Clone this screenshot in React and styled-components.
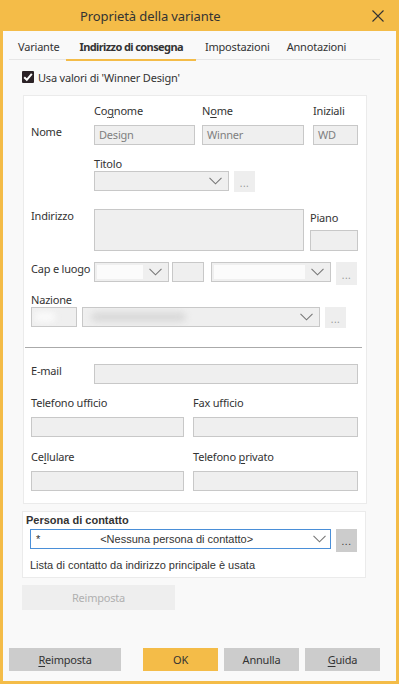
import React from 'react'
import styled, { createGlobalStyle } from 'styled-components'

const ORANGE = '#f4bc48'

const GlobalStyle = createGlobalStyle`
  body {
    margin: 0;
    background: #ffffff;
    font-family: "Noto Sans", "Liberation Sans", sans-serif;
    font-size: 11px;
    letter-spacing: -0.2px;
    color: #333333;
  }
  u { text-decoration-thickness: 1px; text-underline-offset: 2px; }
`

const Window = styled.div`
  width: 399px;
  height: 684px;
  box-sizing: border-box;
  border: 3px solid ${ORANGE};
  border-top: none;
  background: #f9f9f9;
  display: flex;
  flex-direction: column;
`

const TitleBar = styled.div`
  height: 31px;
  margin: 0 -3px;
  background: ${ORANGE};
  display: flex;
  align-items: center;
  justify-content: space-between;
  padding: 0 15px 0 80px;
`

const Title = styled.div`
  font-size: 13px;
  letter-spacing: -0.1px;
  color: #333;
  margin-top: 1px;
`

const TabBar = styled.div`
  height: 28px;
  margin: 0 16px 0 6px;
  border-bottom: 1px solid #e6e6e6;
  display: flex;
`

const Tab = styled.div`
  display: flex;
  align-items: center;
  white-space: nowrap;
  padding: ${(p) => p.$pad || '0 13px'};
  margin-bottom: -1px;
  padding-top: 3px;
  font-weight: ${(p) => (p.$active ? 700 : 400)};
  letter-spacing: ${(p) => (p.$active ? '-0.6px' : '-0.2px')};
  border-bottom: 2px solid ${(p) => (p.$active ? ORANGE : 'transparent')};
  box-sizing: border-box;
  height: 30px;
`

const CheckRow = styled.div`
  display: flex;
  align-items: center;
  gap: 4px;
  margin: 11px 0 0 19px;
  height: 12px;
`

const GroupBox = styled.div`
  margin: 12px 0 0 20px;
  width: 344px;
  box-sizing: border-box;
  background: #ffffff;
  border: 1px solid #ebebeb;
  padding: 8px 8px 12px 7px;
`

const Row = styled.div`
  display: flex;
  align-items: ${(p) => p.$align || 'flex-start'};
  gap: ${(p) => p.$gap || 0}px;
  margin-top: ${(p) => p.$mt || 0}px;
  margin-left: ${(p) => p.$ml || 0}px;
`

const Col = styled.div`
  display: flex;
  flex-direction: column;
  width: ${(p) => (p.$w ? `${p.$w}px` : 'auto')};
  margin-left: ${(p) => p.$ml || 0}px;
  margin-top: ${(p) => p.$mt || 0}px;
  flex: ${(p) => (p.$grow ? 1 : 'none')};
`

const Label = styled.div`
  height: 14px;
  line-height: 14px;
  white-space: nowrap;
  width: ${(p) => (p.$w ? `${p.$w}px` : 'auto')};
  margin-top: ${(p) => p.$mt || 0}px;
  margin-bottom: ${(p) => p.$mb || 0}px;
  flex: none;
`

const Input = styled.div`
  box-sizing: border-box;
  width: ${(p) => (p.$w ? `${p.$w}px` : 'auto')};
  height: ${(p) => p.$h || 20}px;
  flex: ${(p) => (p.$grow ? 1 : 'none')};
  margin-left: ${(p) => p.$ml || 0}px;
  background: #efefef;
  border: 1px solid #c8c8c8;
  color: #808080;
  padding: 0 4px;
  line-height: 18px;
  position: relative;
  overflow: hidden;
`

const ComboBox = styled(Input)`
  display: flex;
  align-items: center;
  justify-content: flex-end;
  padding: 2px 6px 2px 2px;
  gap: 6px;
`

const EditArea = styled.div`
  flex: 1;
  align-self: stretch;
  background: #fbfbfb;
`

const Blur = styled.div`
  position: absolute;
  top: 4px;
  left: ${(p) => p.$l}px;
  width: ${(p) => p.$w}px;
  height: 10px;
  border-radius: 5px;
  background: ${(p) => p.$c};
  filter: blur(3px);
`

const Dots = styled.div`
  width: 21px;
  height: ${(p) => p.$h || 22}px;
  flex: none;
  background: ${(p) => (p.$dark ? '#cccccc' : '#eeeeee')};
  color: ${(p) => (p.$dark ? '#333' : '#999')};
  display: flex;
  align-items: center;
  justify-content: center;
  font-size: 10px;
  padding-top: 2px;
  box-sizing: border-box;
  letter-spacing: 0.5px;
`

const Separator = styled.div`
  height: 1px;
  background: #aaaaaa;
  margin: 19px -4px 0 -6px;
`

const ContactBox = styled.div`
  margin: 7px 0 0 19px;
  width: 344px;
  box-sizing: border-box;
  background: #ffffff;
  border: 1px solid #ebebeb;
  padding: 1px 8px 5px 3px;
  font-family: "Liberation Sans", Arial, sans-serif;
  font-size: 11px;
  letter-spacing: 0;
`

const ContactTitle = styled.div`
  font-weight: 700;
  line-height: 14px;
  color: #333;
`

const ContactCombo = styled.div`
  box-sizing: border-box;
  width: 301px;
  height: 20px;
  border: 1.5px solid #4a8fd8;
  background: #fff;
  display: flex;
  align-items: center;
  padding: 0 4px 0 5px;
  margin-left: 4px;
  color: #333;
`

const ComboText = styled.div`
  flex: 1;
  text-align: center;
`

const Note = styled.div`
  margin: 6px 0 0 4px;
  line-height: 14px;
  color: #333;
`

const DisabledButton = styled.div`
  margin: 7px 0 0 19px;
  width: 153px;
  height: 25px;
  background: #eeeeee;
  color: #b0b0b0;
  display: flex;
  align-items: center;
  justify-content: center;
`

const Footer = styled.div`
  margin-top: auto;
  padding: 0 0 10px 6px;
  display: flex;
`

const FooterButton = styled.div`
  width: ${(p) => p.$w}px;
  height: 23px;
  margin-left: ${(p) => p.$ml || 0}px;
  background: ${(p) => (p.$primary ? ORANGE : '#cccccc')};
  color: #333;
  display: flex;
  align-items: center;
  justify-content: center;
`

const Chevron = () => (
  <svg width="13" height="8" viewBox="0 0 13 8">
    <polyline points="0.5,0.8 6.5,6.8 12.5,0.8" fill="none" stroke="#777" strokeWidth="1.1" />
  </svg>
)

const CloseIcon = () => (
  <svg width="12" height="12" viewBox="0 0 12 12">
    <path d="M0.5 0.5 L11.5 11.5 M11.5 0.5 L0.5 11.5" stroke="#333" strokeWidth="1.1" />
  </svg>
)

const CheckIcon = () => (
  <svg width="12" height="12" viewBox="0 0 12 12">
    <rect width="12" height="12" rx="1" fill="#2b2226" />
    <polyline points="2.2,6.2 4.8,8.8 9.8,2.8" fill="none" stroke="#fff" strokeWidth="2" />
  </svg>
)

const Combo = ({ w, grow, editable, children }) => (
  <ComboBox $w={w} $grow={grow}>
    {editable && <EditArea />}
    {children}
    <Chevron />
  </ComboBox>
)

const App = () => {
  return (
    <>
      <GlobalStyle />
      <Window>
        <TitleBar>
          <Title>Proprietà della variante</Title>
          <CloseIcon />
        </TitleBar>

        <TabBar>
          <Tab $pad="0 7px 0 9px">Variante</Tab>
          <Tab $active>Indirizzo di consegna</Tab>
          <Tab $pad="0 9px 0 9px">Impostazioni</Tab>
          <Tab $pad="0 9px 0 8px">Annotazioni</Tab>
        </TabBar>

        <CheckRow>
          <CheckIcon />
          <span>Usa valori di 'Winner Design'</span>
        </CheckRow>

        <GroupBox>
          <Row>
            <Label $w={63} $mt={21}>Nome</Label>
            <Col $w={101}>
              <Label $mb={7}>Co<u>g</u>nome</Label>
              <Input>Design</Input>
            </Col>
            <Col $w={102} $ml={7}>
              <Label $mb={7}>N<u>o</u>me</Label>
              <Input>Winner</Input>
            </Col>
            <Col $w={45} $ml={9}>
              <Label $mb={7}>Iniziali</Label>
              <Input>WD</Input>
            </Col>
          </Row>

          <Row $mt={12}>
            <Col $ml={63}>
              <Label>Titolo</Label>
              <Row $gap={5}>
                <Combo w={135} />
                <Dots $h={21}>...</Dots>
              </Row>
            </Col>
          </Row>

          <Row $mt={17}>
            <Label $w={63}>Indirizzo</Label>
            <Input $w={210} $h={42} />
            <Col $w={48} $ml={6} $mt={2}>
              <Label $mb={5}>Piano</Label>
              <Input $h={21} />
            </Col>
          </Row>

          <Row $mt={11}>
            <Label $w={63}>Cap e luogo</Label>
            <Combo w={75} editable />
            <Input $w={32} $ml={3} />
            <Row $gap={5} $ml={7}>
              <Combo w={120} editable />
              <Dots $h={23}>...</Dots>
            </Row>
          </Row>

          <Label $mt={8}>Nazione</Label>
          <Row $gap={5}>
            <Input $w={46}>
              <Blur $l={2} $w={22} $c="#fafafa" />
            </Input>
            <Combo w={238}>
              <Blur $l={8} $w={95} $c="#dadada" />
            </Combo>
            <Dots $h={21}>...</Dots>
          </Row>

          <Separator />

          <Row $mt={16}>
            <Label $w={63}>E-mail</Label>
            <Input $grow />
          </Row>

          <Row $mt={12} $gap={9}>
            <Col $w={153}>
              <Label $mb={7}>Telefono ufficio</Label>
              <Input />
            </Col>
            <Col $grow>
              <Label $mb={7}>Fax ufficio</Label>
              <Input />
            </Col>
          </Row>

          <Row $mt={13} $gap={9}>
            <Col $w={153}>
              <Label $mb={7}>Ce<u>l</u>lulare</Label>
              <Input />
            </Col>
            <Col $grow>
              <Label $mb={7}>Telefono <u>p</u>rivato</Label>
              <Input />
            </Col>
          </Row>
        </GroupBox>

        <ContactBox>
          <ContactTitle>Persona di contatto</ContactTitle>
          <Row $mt={2} $gap={5}>
            <ContactCombo>
              <span>*</span>
              <ComboText>&lt;Nessuna persona di contatto&gt;</ComboText>
              <Chevron />
            </ContactCombo>
            <Dots $dark $h={23}>...</Dots>
          </Row>
          <Note>Lista di contatto da indirizzo principale è usata</Note>
        </ContactBox>

        <DisabledButton>Reimposta</DisabledButton>

        <Footer>
          <FooterButton $w={112}><u>R</u>eimposta</FooterButton>
          <FooterButton $w={75} $ml={22} $primary>OK</FooterButton>
          <FooterButton $w={75} $ml={6}>Annulla</FooterButton>
          <FooterButton $w={75} $ml={6}><u>G</u>uida</FooterButton>
        </Footer>
      </Window>
    </>
  )
}

export default App
